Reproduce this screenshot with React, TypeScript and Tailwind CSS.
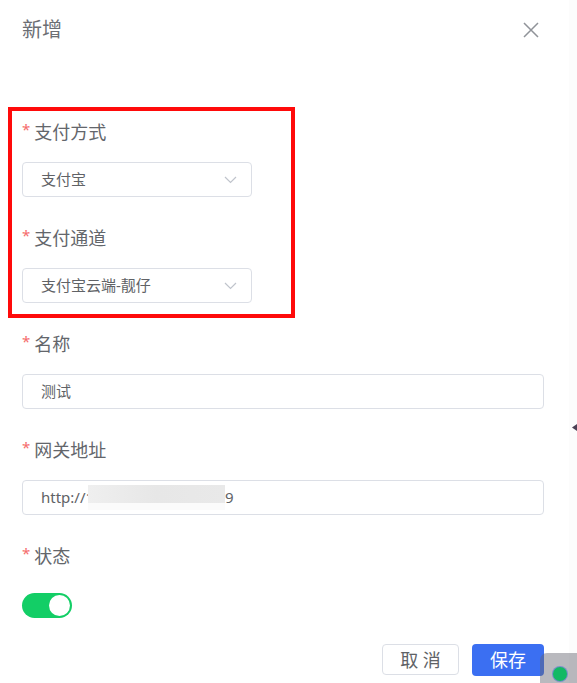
import type { ReactNode } from 'react';

const font = 'font-["Noto_Sans","Noto_Sans_CJK_SC",sans-serif]';

function Label({ children }: { children: ReactNode }) {
  return (
    <div className="h-[36px] mb-3 flex items-center text-[18px] text-[#63666b] leading-none">
      <span className="text-[15px] text-[#f56c6c] mr-[4px] -mt-[6px]">*</span>
      <span>{children}</span>
    </div>
  );
}

function Chevron() {
  return (
    <svg width="13" height="8" viewBox="0 0 13 8" fill="none">
      <polyline points="1,1 6.5,6.5 12,1" stroke="#c0c4cc" strokeWidth="1.2" />
    </svg>
  );
}

function SelectBox({ value }: { value: string }) {
  return (
    <div className="w-[230px] h-[35px] border border-[#dcdfe6] rounded-[4px] flex items-center justify-between pl-[18px] pr-[14px] text-[15px] text-[#606266]">
      <span>{value}</span>
      <Chevron />
    </div>
  );
}

function InputBox({ children }: { children: ReactNode }) {
  return (
    <div className="w-[522px] h-[35px] border border-[#dcdfe6] rounded-[4px] flex items-center pl-[18px] text-[15px] text-[#606266]">
      {children}
    </div>
  );
}

export default function App() {
  return (
    <div className={`relative w-[577px] h-[683px] overflow-hidden bg-white flex ${font}`}>
      <div className="w-[569px] pl-[22px] pr-[25px] flex flex-col">
        <div className="h-[60px] flex items-center justify-between">
          <span className="text-[20px] text-[#6b6e73]">新增</span>
          <svg width="16" height="16" viewBox="0 0 16 16" className="mr-[5px]">
            <path d="M1 1 15 15M15 1 1 15" stroke="#909399" strokeWidth="1.5" />
          </svg>
        </div>

        <div className="pt-[54px]">
          <div className="relative">
            <div className="absolute -left-[14px] -top-[7px] w-[287px] h-[211px] border-4 border-[#ff0a0a] pointer-events-none" />
            <div className="mb-[23px]">
              <Label>支付方式</Label>
              <SelectBox value="支付宝" />
            </div>
            <div className="mb-[23px]">
              <Label>支付通道</Label>
              <SelectBox value="支付宝云端-靓仔" />
            </div>
          </div>

          <div className="mb-[23px]">
            <Label>名称</Label>
            <InputBox>测试</InputBox>
          </div>

          <div className="mb-[23px]">
            <Label>网关地址</Label>
            <InputBox>
              <span>http://1</span>
              <span className="-ml-[6px] w-[137px] h-[25px] flex flex-col">
                <span className="h-[18px] bg-gradient-to-r from-[#efefef] via-[#e7e7e7] to-[#e9e9e9]" />
                <span className="h-[7px] bg-[#fbfbfb]" />
              </span>
              <span>9</span>
            </InputBox>
          </div>

          <div>
            <Label>状态</Label>
            <div className="h-[38px] flex items-center">
              <div className="w-[50px] h-[25px] rounded-full bg-[#13ce66] flex items-center justify-end pr-[2px]">
                <div className="w-[21px] h-[21px] rounded-full bg-white" />
              </div>
            </div>
          </div>
        </div>

        <div className="mt-[20px] flex justify-end gap-[13px]">
          <button className="w-[77px] h-[31px] border border-[#dcdfe6] rounded-[4px] text-[18px] text-[#606266] leading-none">
            取 消
          </button>
          <button className="w-[72px] h-[32px] rounded-[4px] bg-[#3b6ff2] text-[18px] text-white leading-none">
            保存
          </button>
        </div>
      </div>

      <div className="w-px bg-[#e4e4e4]" />
      <div className="flex-1 bg-[#fcfcfc] pt-[424px]">
        <svg width="5" height="7" viewBox="0 0 5 7" className="ml-[3px]">
          <path d="M0 3.5 5 0V7Z" fill="#4b4155" />
        </svg>
      </div>

      <div className="absolute left-[540px] top-[653px] w-[40px] h-[34px] rounded-tl-[7px] bg-[#64646e]/45 flex items-start pl-[13px] pt-[14px]">
        <div className="w-[14px] h-[14px] rounded-full bg-[#13b964] ring-1 ring-[#4d73d0]/60" />
      </div>
    </div>
  );
}
